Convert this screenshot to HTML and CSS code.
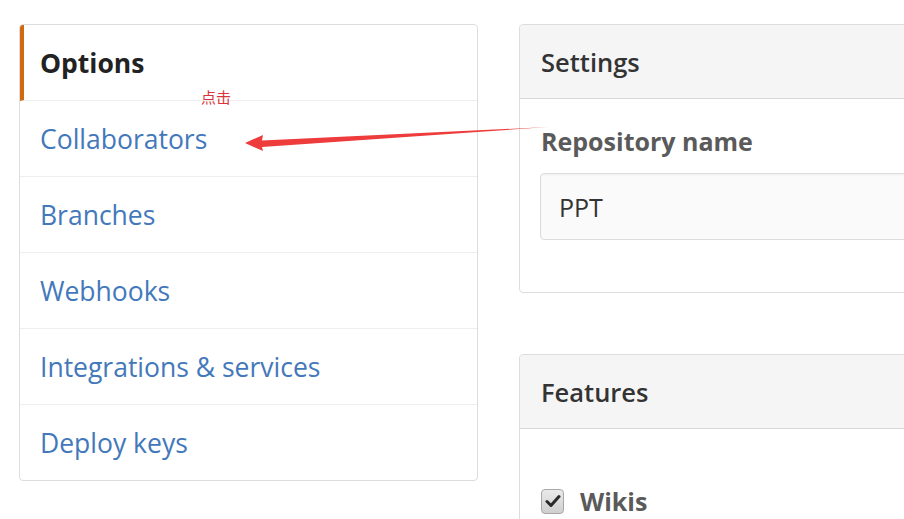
FILE: index.html
```html
<!DOCTYPE html>
<html>
<head>
<meta charset="utf-8">
<link rel="stylesheet" href="styles.css">
</head>
<body>
<div class="page">
  <nav class="menu">
    <div class="menu-item selected">Options</div>
    <a class="menu-item">Collaborators</a>
    <a class="menu-item">Branches</a>
    <a class="menu-item">Webhooks</a>
    <a class="menu-item">Integrations &amp; services</a>
    <a class="menu-item last">Deploy keys</a>
  </nav>
  <main class="content">
    <section class="box settings">
      <div class="box-header">Settings</div>
      <div class="box-body">
        <label class="label">Repository name</label>
        <div class="input">PPT</div>
      </div>
    </section>
    <section class="box features">
      <div class="box-header">Features</div>
      <div class="box-body features-body">
        <div class="check-row">
          <span class="checkbox">
            <svg width="16" height="14" viewBox="0 0 16 14"><path d="M2 7.5 L6 11.5 L14 2.5" fill="none" stroke="#2a2a2a" stroke-width="3" stroke-linecap="round" stroke-linejoin="round"/></svg>
          </span>
          <span class="check-label">Wikis</span>
        </div>
      </div>
    </section>
  </main>
</div>
<div class="note">点击</div>
<svg class="arrow" width="904" height="519" viewBox="0 0 904 519">
  <polygon points="245,143 263,135 262,140.5 548,127 262,147 263,151" fill="#ee3b3b"/>
</svg>
</body>
</html>
```
FILE: styles.css
```css
html, body {
  margin: 0;
  padding: 0;
  overflow: hidden;
  background: #fff;
}
body {
  width: 904px;
  height: 519px;
  position: relative;
  font-family: "Open Sans", "Noto Sans", sans-serif;
}
.page {
  display: flex;
  align-items: flex-start;
  gap: 41px;
  padding: 24px 0 0 19px;
  width: 1400px;
}
.menu {
  width: 457px;
  border: 1px solid #ddd;
  border-radius: 4px;
  display: flex;
  flex-direction: column;
  overflow: hidden;
}
.menu-item {
  height: 75px;
  border-bottom: 1px solid #eee;
  display: flex;
  align-items: center;
  padding-left: 20px;
  font-size: 26.5px;
  color: #4378bb;
  text-decoration: none;
}
.menu-item.last {
  border-bottom: none;
}
.menu-item.selected {
  color: #222;
  font-weight: 700;
  border-left: 4px solid #d26911;
  padding-left: 16px;
  height: 75px;
}
.content {
  width: 600px;
  display: flex;
  flex-direction: column;
  gap: 61px;
}
.box {
  border: 1px solid #ddd;
  border-radius: 4px;
}
.box-header {
  height: 73px;
  background: #f5f5f5;
  border-bottom: 1px solid #d8d8d8;
  display: flex;
  align-items: center;
  padding-left: 21px;
  font-size: 25.5px;
  font-weight: 600;
  color: #333;
  border-radius: 4px 4px 0 0;
}
.box-body {
  padding: 25px 21px 52px 20px;
}
.label {
  display: block;
  font-size: 25px;
  font-weight: 700;
  color: #5a5a5a;
  line-height: 34px;
  margin-left: 1px;
}
.input {
  margin-top: 15px;
  height: 65px;
  border: 1px solid #ddd;
  border-radius: 4px;
  background: #fafafa;
  display: flex;
  align-items: center;
  padding-left: 18px;
  font-size: 25px;
  color: #333;
  box-shadow: inset 0 1px 2px rgba(0,0,0,0.05);
}
.features-body {
  padding-top: 55px;
}
.check-row {
  display: flex;
  align-items: center;
  gap: 16px;
  margin-left: 1px;
}
.checkbox {
  width: 21px;
  height: 23px;
  border: 1px solid #a8a8a8;
  border-radius: 4px;
  background: linear-gradient(#eaeaea, #cfcfcf);
  display: flex;
  align-items: center;
  justify-content: center;
}
.check-label {
  font-size: 25px;
  font-weight: 700;
  color: #5a5a5a;
}
.note {
  position: absolute;
  left: 201px;
  top: 88px;
  font-family: "Noto Sans CJK SC", sans-serif;
  font-size: 15px;
  color: #d9343a;
  line-height: 18px;
}
.arrow {
  position: absolute;
  left: 0;
  top: 0;
  pointer-events: none;
}
```
